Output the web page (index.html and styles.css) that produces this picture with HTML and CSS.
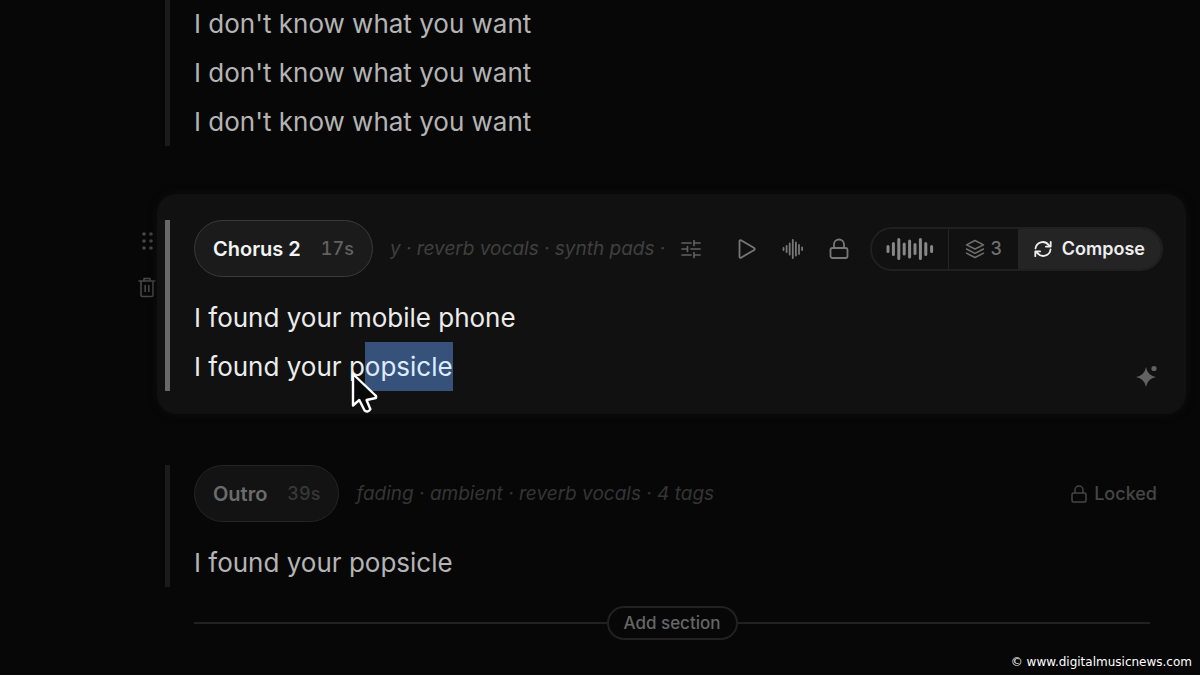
FILE: index.html
```html
<!DOCTYPE html>
<html lang="en">
<head>
<meta charset="utf-8">
<title>Lyrics editor</title>
<link rel="stylesheet" href="styles.css">
</head>
<body>
<main class="editor">
  <div class="row">
    <div class="side"></div>
    <section class="section section-first">
      <div class="body">
        <p class="lyrics">I don't know what you want<br>I don't know what you want<br>I don't know what you want</p>
      </div>
    </section>
  </div>

  <div class="row">
    <div class="side">
      <button class="icon-btn" aria-label="Move section">
        <svg width="18" height="22" viewBox="0 0 18 22" fill="currentColor"><circle cx="6" cy="4" r="1.800"/><circle cx="13" cy="4" r="1.800"/><circle cx="6" cy="11" r="1.800"/><circle cx="13" cy="11" r="1.800"/><circle cx="6" cy="18" r="1.800"/><circle cx="13" cy="18" r="1.800"/></svg>
      </button>
      <button class="icon-btn" aria-label="Delete section">
        <svg width="18" height="22" viewBox="0 0 18 22" fill="none" stroke="currentColor" stroke-width="1.600" stroke-linecap="round" stroke-linejoin="round"><path d="M1 5h16M3 5v14a1.500 1.500 0 0 0 1.500 1.500h9A1.500 1.500 0 0 0 15 19V5M6 5V2.500h6V5M7.200 9.500v6M10.800 9.500v6"/></svg>
      </button>
    </div>
    <section class="section section-active">
      <div class="body">
        <header class="head">
          <button class="pill">Chorus 2 <span class="time">17s</span></button>
          <span class="tags tags-clipped"><span>y · reverb vocals · synth pads ·</span></span>
          <div class="tools">
            <button class="icon-btn tune" aria-label="Adjust tags">
              <svg width="20" height="20" viewBox="0 0 20 20" fill="none" stroke="currentColor" stroke-width="1.700" stroke-linecap="round"><path d="M1 4h9M13 4h6M13 1.500v5M1 10h5M10 10h9M6.500 7.500v5M1 16h9M13 16h6M13 13.500v5"/></svg>
            </button>
            <button class="icon-btn" aria-label="Play">
              <svg width="20" height="20" viewBox="0 0 20 20" fill="none" stroke="currentColor" stroke-width="1.800" stroke-linejoin="round"><path d="M2.500 2.200a1 1 0 0 1 1.500-.9l13.200 7.800a1 1 0 0 1 0 1.800L4 18.700a1 1 0 0 1-1.500-.9z"/></svg>
            </button>
            <button class="icon-btn" aria-label="Waveform">
              <svg width="22" height="20" viewBox="0 0 22 20" fill="none" stroke="currentColor" stroke-width="1.800" stroke-linecap="round"><path d="M1.500 9v2M4.600 7v6M7.700 4.500v11M10.800 1v18M13.900 3.500v13M17 6v9M20.100 8.500v2.500"/></svg>
            </button>
            <button class="icon-btn" aria-label="Lock section">
              <svg width="20" height="22" viewBox="0 0 20 22" fill="none" stroke="currentColor" stroke-width="1.800"><rect x="1.500" y="10" width="17" height="10" rx="2"/><path d="M5 10V6.500a5 5 0 0 1 10 0V10"/></svg>
            </button>
          </div>
          <div class="group">
            <button class="seg wave" aria-label="Sound">
              <svg width="48" height="24" viewBox="0 0 48 24" fill="none" stroke="currentColor" stroke-width="3" stroke-linecap="round"><path d="M2 9.500v5M7.400 6.500v11M12.800 2.500v19M18.200 7v10M23.600 4v16M29 7.500v9M34.400 2.500v19M39.800 6.500v11M45.600 9.500v5"/></svg>
            </button>
            <button class="seg takes">
              <svg width="20" height="20" viewBox="0 0 20 20" fill="none" stroke="currentColor" stroke-width="1.500" stroke-linejoin="round" stroke-linecap="round"><path d="M10 1.500l8.500 4.300L10 10 1.500 5.800zM1.500 10l8.500 4.300L18.500 10M1.500 14.200l8.500 4.300 8.500-4.300"/></svg>
              3
            </button>
            <button class="seg compose">
              <svg width="18" height="18" viewBox="0 0 18 18" fill="none" stroke="currentColor" stroke-width="1.800" stroke-linecap="round" stroke-linejoin="round"><path d="M1.500 8.500a7.300 7.300 0 0 1 13-3.600l1.700 1.600M16.700 1.800v4.800h-4.800M16.500 9.500a7.300 7.300 0 0 1-13 3.600l-1.700-1.600M1.300 16.200v-4.800h4.800"/></svg>
              Compose
            </button>
          </div>
        </header>
        <p class="lyrics lyrics-bright">I found your mobile phone<br>I found your p<span class="selection">opsicle<svg class="cursor" width="28" height="44" viewBox="0 0 28 44"><path d="M2 2v31.500l6.300-5.500 5.300 10.500q3.600 2.500 5.800-1.300L15.500 28l9.300-2q1-1.500-.8-3z" fill="#080808" stroke="#fff" stroke-width="2.400" stroke-linejoin="round"/></svg></span></p>
      </div>
      <button class="icon-btn sparkle" aria-label="Suggest lyrics">
        <svg width="22" height="22" viewBox="0 0 22 22" fill="currentColor"><path d="M10 2q1.500 8.500 10 10-8.500 1.500-10 10-1.500-8.500-10-10 8.500-1.500 10-10z"/><circle cx="18" cy="3.500" r="2.600"/></svg>
      </button>
    </section>
  </div>

  <div class="row">
    <div class="side"></div>
    <section class="section section-locked">
      <div class="body">
        <header class="head">
          <button class="pill">Outro <span class="time">39s</span></button>
          <span class="tags">fading · ambient · reverb vocals · 4 tags</span>
          <span class="locked">
            <svg width="16" height="18" viewBox="0 0 16 18" fill="none" stroke="currentColor" stroke-width="1.500"><rect x="1" y="8" width="14" height="9" rx="1.500"/><path d="M4 8V5a4 4 0 0 1 8 0v3"/></svg>
            Locked
          </span>
        </header>
        <p class="lyrics">I found your popsicle</p>
      </div>
    </section>
  </div>

  <div class="add">
    <button class="add-btn">Add section</button>
  </div>
</main>
<footer class="credit">© www.digitalmusicnews.com</footer>
</body>
</html>
```
FILE: styles.css
```css
* {
  box-sizing: border-box;
}

body {
  margin: 0;
  min-height: 100vh;
  display: flex;
  flex-direction: column;
  background: #070707;
  color: #b4b4b4;
  font-family: Inter, "Liberation Sans", sans-serif;
}

button {
  margin: 0;
  padding: 0;
  border: 0;
  background: none;
  color: inherit;
  font: inherit;
}

svg {
  display: block;
  flex: none;
}

.editor {
  margin-top: -1px;
  padding-right: 14px;
}

.row {
  display: flex;
}

.row + .row {
  margin-top: 25px;
}

.side {
  flex: none;
  width: 157px;
  padding: 36px 1px 0 0;
  display: flex;
  flex-direction: column;
  align-items: flex-end;
  gap: 24px;
  color: #484848;
}

.section {
  flex: 1;
  min-width: 0;
  position: relative;
  padding: 26px 23px 23px 8px;
  border-radius: 20px;
}

.section-first {
  padding-top: 0;
}

.section-active {
  background: #111111;
  box-shadow: 0 0 8px #0f0f0f;
}

.section-locked {
  padding-bottom: 19px;
}

.body {
  border-left: 5px solid #1b1b1b;
  padding-left: 24px;
}

.section-active .body {
  border-color: #686868;
}

.head {
  display: flex;
  align-items: center;
  margin-bottom: 16px;
}

.pill {
  flex: none;
  height: 57px;
  padding: 0 18px;
  display: flex;
  align-items: center;
  gap: 20px;
  border: 1px solid #3a3a3a;
  border-radius: 29px;
  background: #1b1b1b;
  color: #f4f4f4;
  font-size: 20px;
  font-weight: 600;
}

.time {
  color: #626262;
  font-size: 18px;
  font-weight: 500;
  font-variant-numeric: tabular-nums;
}

.section-locked .pill {
  border-color: #242424;
  background: #131313;
  color: #6c6c6c;
}

.section-locked .time {
  color: #383838;
}

.tags {
  margin-left: 17px;
  color: #353535;
  font-size: 19px;
  font-style: italic;
  white-space: nowrap;
}

.tags-clipped {
  flex: 1;
  min-width: 0;
  color: #404040;
  overflow: hidden;
}

.tools {
  display: flex;
  align-items: center;
  gap: 25px;
  padding: 0 21px 0 12px;
  color: #777777;
}

.tune {
  margin-right: 11px;
  color: #606060;
}

.group {
  flex: none;
  display: flex;
  height: 44px;
  border: 2px solid #202020;
  border-radius: 22px;
  overflow: hidden;
}

.seg {
  display: flex;
  align-items: center;
  color: #707070;
  font-size: 18px;
  font-weight: 500;
}

.wave {
  padding: 0 14px;
  color: #888888;
}

.takes {
  gap: 6px;
  padding: 0 16px;
  border-left: 1px solid #252525;
}

.compose {
  gap: 10px;
  padding: 0 16px;
  background: #242424;
  color: #eeeeee;
  font-weight: 600;
}

.lyrics {
  margin: 0;
  font-size: 26px;
  line-height: 49px;
}

.lyrics-bright {
  color: #ececec;
}

.selection {
  position: relative;
  display: inline-block;
  background: #37527a;
  color: #dcecff;
}

.cursor {
  position: absolute;
  left: -14px;
  top: 30px;
}

.sparkle {
  position: absolute;
  right: 28px;
  bottom: 27px;
  color: #626262;
}

.locked {
  display: flex;
  align-items: center;
  gap: 7px;
  margin-left: auto;
  margin-right: 6px;
  color: #464646;
  font-size: 18px;
  font-weight: 500;
}

.add {
  display: flex;
  align-items: center;
  margin: 0 36px 0 194px;
}

.add::before,
.add::after {
  content: "";
  flex: 1;
  height: 2px;
  background: #212121;
}

.add-btn {
  height: 34px;
  padding: 0 15px;
  border: 2px solid #212121;
  border-radius: 17px;
  color: #666666;
  font-size: 17px;
  font-weight: 500;
}

.credit {
  margin-top: auto;
  padding: 0 8px 5px;
  color: #ffffff;
  font-family: "DejaVu Sans", sans-serif;
  font-size: 12px;
  line-height: 16px;
  text-align: right;
}
```
